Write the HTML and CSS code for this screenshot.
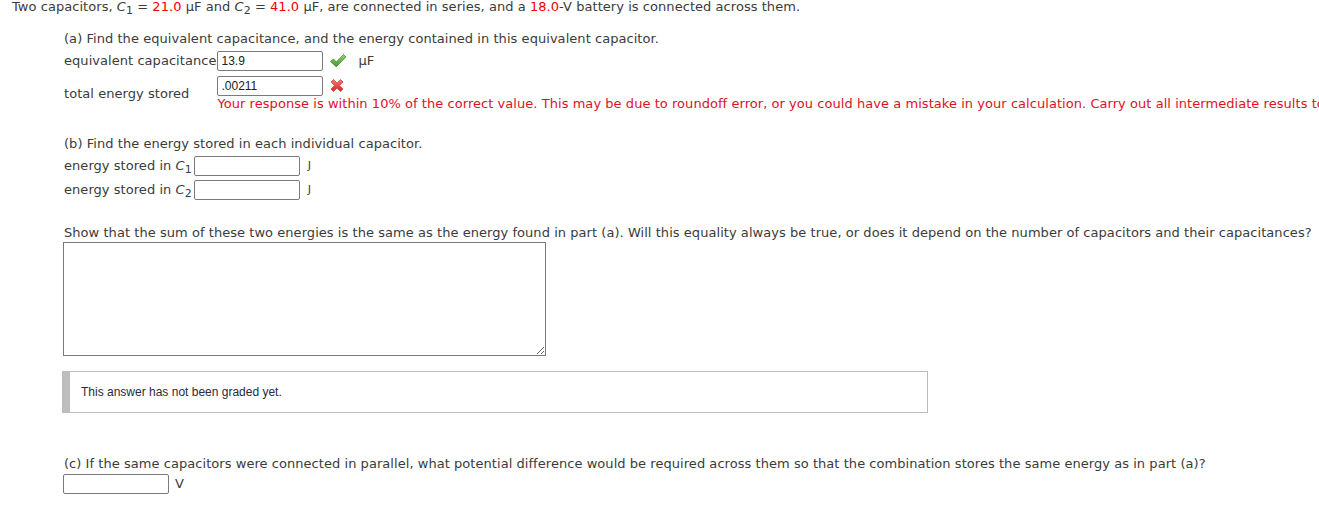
FILE: index.html
```html
<!DOCTYPE html>
<html>
<head>
<meta charset="utf-8">
<link rel="stylesheet" href="styles.css">
</head>
<body>
<div class="page">
  <div class="intro">Two capacitors, <i class="var">C</i><sub>1</sub> = <span class="red">21.0</span> µF and <i class="var">C</i><sub>2</sub> = <span class="red">41.0</span> µF, are connected in series, and a <span class="red">18.0</span>-V battery is connected across them.</div>

  <div class="part">
    <div class="q q-a">(a) Find the equivalent capacitance, and the energy contained in this equivalent capacitor.</div>
    <div class="grid grid-a">
      <div class="label">equivalent capacitance</div>
      <div class="cell">
        <div class="ans"><input class="box" type="text" value="13.9"><svg class="mark" width="18" height="16" viewBox="0 0 18 16"><defs><linearGradient id="g" x1="0" y1="0" x2="0" y2="1"><stop offset="0" stop-color="#9ad07c"/><stop offset="1" stop-color="#3f9a2c"/></linearGradient></defs><path d="M1.5 8.5 L4.5 6 L7.2 9 L14.5 1.5 L16.8 4 L7.2 13.8 Z" fill="url(#g)" stroke="#3d8a2c" stroke-width="0.8" stroke-linejoin="round"/></svg><span class="unit unit-f">µF</span></div>
      </div>
      <div class="label label-mid">total energy stored</div>
      <div class="cell">
        <div class="ans"><input class="box" type="text" value=".00211"><svg class="mark" width="18" height="16" viewBox="0 0 18 16"><defs><linearGradient id="r" x1="0" y1="0" x2="0" y2="1"><stop offset="0" stop-color="#ff7a7a"/><stop offset="1" stop-color="#e02020"/></linearGradient></defs><path d="M2 4 L4.5 1.5 L8 5 L11.5 1.5 L14 4 L10.5 7.5 L14 11 L11.5 13.5 L8 10 L4.5 13.5 L2 11 L5.5 7.5 Z" fill="url(#r)" stroke="#d43030" stroke-width="0.7" stroke-linejoin="round"/></svg></div>
        <div class="err">Your response is within 10% of the correct value. This may be due to roundoff error, or you could have a mistake in your calculation. Carry out all intermediate results to at least four-digit accuracy to minimize roundoff error.</div>
      </div>
    </div>

    <div class="q q-b">(b) Find the energy stored in each individual capacitor.</div>
    <div class="grid grid-b">
      <div class="label">energy stored in <i class="var">C</i><sub>1</sub></div>
      <div class="ans"><input class="box" type="text" value=""><span class="unit unit-j">J</span></div>
      <div class="label">energy stored in <i class="var">C</i><sub>2</sub></div>
      <div class="ans"><input class="box" type="text" value=""><span class="unit unit-j">J</span></div>
    </div>

    <div class="q q-show">Show that the sum of these two energies is the same as the energy found in part (a). Will this equality always be true, or does it depend on the number of capacitors and their capacitances?</div>
    <textarea class="essay"></textarea>
    <div class="graded">This answer has not been graded yet.</div>

    <div class="q q-c">(c) If the same capacitors were connected in parallel, what potential difference would be required across them so that the combination stores the same energy as in part (a)?</div>
    <div class="ans"><input class="box" type="text" value=""><span class="unit unit-v">V</span></div>
  </div>
</div>
</body>
</html>
```

FILE: styles.css
```css
html, body {
  margin: 0;
  padding: 0;
  background: #fff;
  overflow: hidden;
}
.page {
  padding: 0 12px;
  font-family: "DejaVu Sans", Verdana, sans-serif;
  font-size: 13px;
  line-height: 16px;
  letter-spacing: 0.05px;
  color: #3b3b3b;
  white-space: nowrap;
}
.intro {
  height: 16px;
  margin-top: -1px;
}
.red { color: #f00000; }
.var { font-style: italic; }
sub {
  font-size: 11px;
  line-height: 0;
  vertical-align: -3px;
}
.part {
  padding-left: 52px;
}
.q { height: 16px; }
.q-a { margin-top: 16px; }
.grid {
  display: grid;
  grid-template-columns: auto 1fr;
  column-gap: 1px;
  margin-top: 4px;
}
.grid-a { row-gap: 5px; }
.grid-b { row-gap: 4px; column-gap: 2px; }
.label {
  align-self: center;
  height: 16px;
}
.label-mid { align-self: center; padding-top: 0; }
.ans {
  display: flex;
  align-items: center;
  height: 20px;
}
.box {
  box-sizing: border-box;
  width: 106px;
  height: 20px;
  margin: 0;
  padding: 0 3px;
  border: 1px solid #7a7a7a;
  border-radius: 2px;
  font-family: "Liberation Sans", Arial, sans-serif;
  font-size: 12px;
  letter-spacing: 0;
  color: #222;
  background: #fff;
  outline: none;
}
.mark {
  margin-left: 6px;
  flex: none;
}
.unit { color: #3b3b3b; }
.unit-f { margin-left: 11px; }
.unit-j { margin-left: 8px; font-size: 11px; }
.unit-v { margin-left: 6px; }
.err {
  color: #e0102a;
  height: 16px;
  margin-top: 0;
}
.q-b { margin-top: 24px; }
.q-show { margin-top: 25px; }
.essay {
  display: block;
  box-sizing: border-box;
  width: 483px;
  height: 114px;
  margin: 1px 0 0 -1px;
  border: 1px solid #7a7a7a;
  border-radius: 0;
  resize: both;
  padding: 2px;
}
.graded {
  box-sizing: border-box;
  width: 866px;
  height: 42px;
  margin: 15px 0 0 -2px;
  border: 1px solid #bdbdbd;
  border-left: 8px solid #bdbdbd;
  padding-left: 11px;
  display: flex;
  align-items: center;
  font-family: "Liberation Sans", Arial, sans-serif;
  font-size: 12px;
  letter-spacing: 0;
  color: #2a2a3a;
}
.q-c { margin-top: 43px; }
.q-c + .ans { margin-top: 2px; margin-left: -1px; }
```
